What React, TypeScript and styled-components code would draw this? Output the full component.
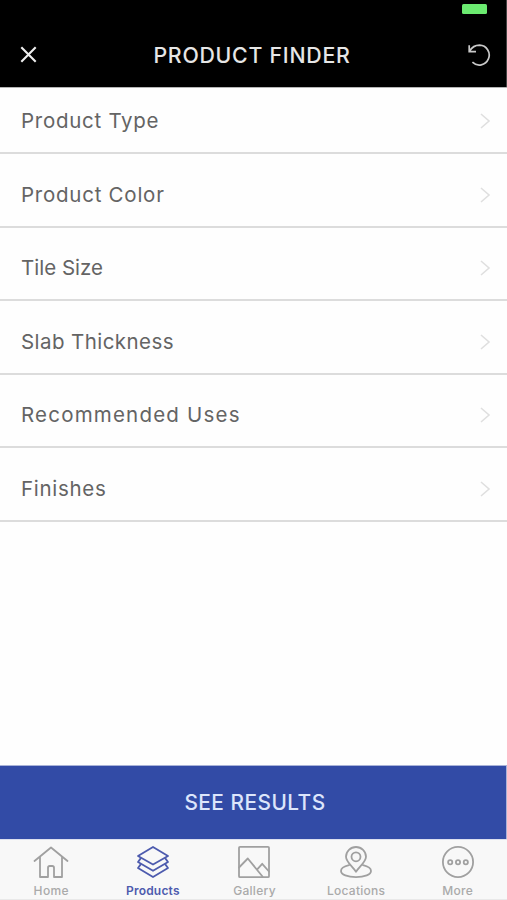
import React from "react";
import styled, { createGlobalStyle } from "styled-components";

const GlobalStyle = createGlobalStyle`
  * { box-sizing: border-box; }
  body { margin: 0; background: #fff; }
`;

const Screen = styled.div`
  display: flex;
  flex-direction: column;
  width: 507px;
  height: 900px;
  overflow: hidden;
  background: #fefefe;
  font-family: Inter, sans-serif;
`;

const StatusBar = styled.div`
  display: flex;
  flex: none;
  justify-content: flex-end;
  height: 22px;
  padding: 4px 19px 0 0;
  border-right: 1px solid #444;
  background: #000;
`;

const Battery = styled.div`
  width: 25px;
  height: 10px;
  border-radius: 1.5px;
  background: #6bea70;
`;

const Header = styled.header`
  display: flex;
  flex: none;
  align-items: center;
  justify-content: space-between;
  height: 65px;
  padding: 0 15px 0 20px;
  border-right: 1px solid #444;
  background: #000;
`;

const Title = styled.h1`
  margin: 0;
  font-size: 21.3px;
  line-height: 26px;
  font-weight: 500;
  letter-spacing: 0.75px;
  color: #e6e6e6;
  white-space: nowrap;
`;

const IconButton = styled.button`
  display: flex;
  padding: 0;
  border: 0;
  background: none;
`;

const List = styled.ul`
  flex: 1;
  margin: 0;
  padding: 0;
  border-top: 1px solid #b4b4b4;
  list-style: none;
`;

const Row = styled.li`
  display: flex;
  align-items: center;
  justify-content: space-between;
  height: 73.6px;
  padding: 9.6px 16px 0 21px;
  border-bottom: 2px solid #dcdcdc;

  &:first-child {
    height: 66px;
    padding-top: 2px;
  }
`;

const Label = styled.span<{ $spacing: number }>`
  font-size: 20.5px;
  line-height: 26px;
  letter-spacing: ${(p) => p.$spacing}px;
  color: #646464;
  white-space: nowrap;
`;

const ResultsButton = styled.button`
  display: flex;
  flex: none;
  align-items: center;
  justify-content: center;
  height: 74px;
  padding: 0 0 0 4px;
  border: 0;
  border-top: 1px solid #a9b3d8;
  border-right: 1px solid #aab2d8;
  background: #324ba6;
  font-family: inherit;
  font-size: 20.8px;
  font-weight: 500;
  letter-spacing: 0.5px;
  color: #dce5fb;
`;

const TabBar = styled.nav`
  display: grid;
  flex: none;
  grid-template-columns: repeat(5, 101.6px);
  height: 61px;
  border-top: 1px solid #dcdfee;
  border-bottom: 1px solid #e9e9e9;
  background: #f8f8f8;
`;

const Tab = styled.a<{ $active?: boolean }>`
  display: flex;
  flex-direction: column;
  align-items: center;
  padding: 5px 0 0 1px;
  color: ${(p) => (p.$active ? "#4d5bae" : "#a0a0a0")};
`;

const TabLabel = styled.span<{ $active?: boolean; $spacing: number }>`
  margin-top: 2px;
  font-size: 12px;
  line-height: 16px;
  font-weight: ${(p) => (p.$active ? 600 : 500)};
  letter-spacing: ${(p) => p.$spacing}px;
  color: ${(p) => (p.$active ? "#4d5bae" : "#aaaaaa")};
`;

const TabIcon = ({ children }: { children: React.ReactNode }) => (
  <svg width="36" height="36" viewBox="0 0 36 36" fill="none" stroke="currentColor" strokeWidth="1.8" strokeLinejoin="round" strokeLinecap="round">
    {children}
  </svg>
);

const rows = [
  { label: "Product Type", spacing: 0.72 },
  { label: "Product Color", spacing: 0.75 },
  { label: "Tile Size", spacing: 0 },
  { label: "Slab Thickness", spacing: 0.43 },
  { label: "Recommended Uses", spacing: 1.2 },
  { label: "Finishes", spacing: 0.7 },
];

const tabs = [
  {
    label: "Home",
    spacing: 0.4,
    icon: <path d="M1.5 16 18 2.5 34.5 16M7 11.8V32h8V22.8q0-1.8 1.8-1.8h2.4q1.8 0 1.8 1.8V32h8V11.8" />,
  },
  {
    label: "Products",
    spacing: 0.2,
    active: true,
    icon: (
      <>
        <path d="M18 2 33 11 18 19.5 3 11Z" />
        <path d="M5.5 13.6 3 17 18 25.8 33 17 30.5 13.6" />
        <path d="M5.5 19.6 3 23 18 32 33 23 30.5 19.6" />
      </>
    ),
  },
  {
    label: "Gallery",
    spacing: 0.3,
    icon: (
      <>
        <rect x="3" y="1.8" width="30" height="30.4" rx="1" />
        <path d="M3 22.5 11.8 13.5 26.5 31.5M21 24.7 26.2 18.8 33 26.5" />
      </>
    ),
  },
  {
    label: "Locations",
    spacing: 0.25,
    icon: (
      <>
        <path d="M18 26.8C15.5 22.5 8 17 8 11.7a10 9.7 0 0 1 20 0C28 17 20.5 22.5 18 26.8Z" />
        <circle cx="18" cy="11.8" r="4.5" />
        <path d="M11 20.2C6 21.3 3 23.5 3 26c0 3.5 6.5 6.1 15 6.1S33 29.5 33 26c0-2.5-3-4.7-8-5.8" />
      </>
    ),
  },
  {
    label: "More",
    spacing: 0.3,
    icon: (
      <>
        <circle cx="18" cy="17" r="15.1" />
        <circle cx="10.2" cy="17.2" r="2.1" />
        <circle cx="18" cy="17.2" r="2.1" />
        <circle cx="25.8" cy="17.2" r="2.1" />
      </>
    ),
  },
];

export default function App() {
  return (
    <Screen>
      <GlobalStyle />
      <StatusBar>
        <Battery />
      </StatusBar>
      <Header>
        <IconButton aria-label="Close">
          <svg width="17" height="17" viewBox="0 0 17 17" fill="none" stroke="#eee" strokeWidth="2.1">
            <path d="M1.3 1.3 15.7 15.7M15.7 1.3 1.3 15.7" />
          </svg>
        </IconButton>
        <Title>PRODUCT FINDER</Title>
        <IconButton aria-label="Reset">
          <svg width="24" height="24" viewBox="0 0 24 24" fill="none" stroke="#c9c9c9" strokeWidth="1.7">
            <path d="M2.2 2.2V8.6H9M2.6 8.2C4.8 4.3 8.2 2.2 12.6 2.2A9.9 9.9 0 1 1 5.4 19.2" />
          </svg>
        </IconButton>
      </Header>
      <List>
        {rows.map((row) => (
          <Row key={row.label}>
            <Label $spacing={row.spacing}>{row.label}</Label>
            <svg width="12" height="18" viewBox="0 0 12 18" fill="none" stroke="#dfdfdf" strokeWidth="1.6">
              <path d="M2 2 10 9 2 16" />
            </svg>
          </Row>
        ))}
      </List>
      <ResultsButton>SEE RESULTS</ResultsButton>
      <TabBar>
        {tabs.map((tab) => (
          <Tab key={tab.label} $active={tab.active}>
            <TabIcon>{tab.icon}</TabIcon>
            <TabLabel $active={tab.active} $spacing={tab.spacing}>
              {tab.label}
            </TabLabel>
          </Tab>
        ))}
      </TabBar>
    </Screen>
  );
}
